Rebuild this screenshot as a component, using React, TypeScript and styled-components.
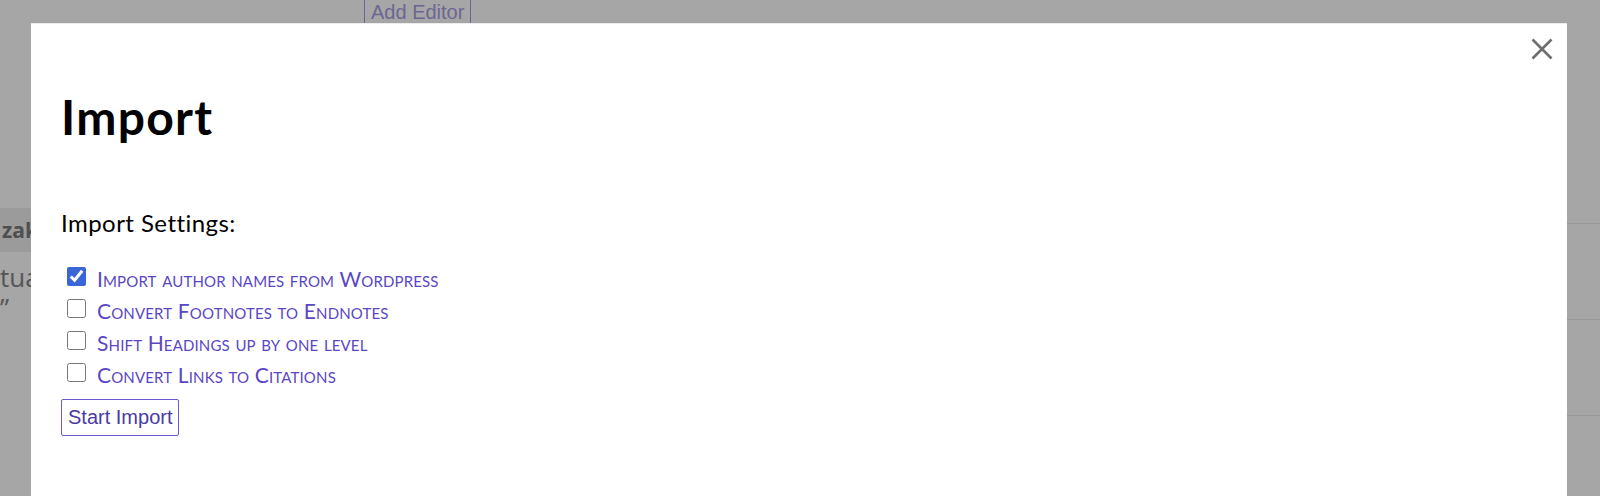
import React from "react";
import styled, { createGlobalStyle } from "styled-components";

const Global = createGlobalStyle`
  html, body {
    margin: 0;
    padding: 0;
    background: #ffffff;
    width: 1600px;
    height: 496px;
    overflow: hidden;
  }
  * { box-sizing: border-box; }
`;

/* ---------- underlying page ---------- */

const Page = styled.div`
  width: 1600px;
  height: 496px;
  overflow: hidden;
  font-family: "Open Sans", "Liberation Sans", sans-serif;
`;

const TopBar = styled.div`
  display: flex;
  align-items: flex-start;
  height: 40px;
  margin-top: -6px;
  padding-left: 364px;
`;

const GhostButton = styled.button`
  font-family: "Liberation Sans", Arial, sans-serif;
  font-size: 20px;
  line-height: 23px;
  padding: 6px 6px;
  background: #ffffff;
  border: 1px solid #a99ae6;
  border-radius: 2px;
  color: #a89de0;
`;

const Body = styled.div`
  display: flex;
`;

const Sidebar = styled.aside`
  width: 31px;
  flex: none;
  overflow: hidden;
  padding-top: 174px;
  display: flex;
  flex-direction: column;
`;

const SideBand = styled.div`
  height: 44px;
  background: #efefef;
  display: flex;
  align-items: center;
  padding-left: 2px;
  font-weight: 700;
  font-size: 21px;
  color: #7a7a7a;
  white-space: nowrap;
`;

const SideText = styled.p<{ $tight?: boolean }>`
  margin: ${(p) => (p.$tight ? "0" : "10px")} 0 0 0;
  font-size: 26px;
  line-height: 30px;
  color: #848484;
  white-space: nowrap;
`;

const Main = styled.main`
  flex: 1;
  padding-top: 94px;
`;

const TableRow = styled.div`
  height: 96px;
  border-bottom: 1px solid #e9e9e9;
`;

const Overlay = styled.div`
  position: fixed;
  inset: 0;
  background: rgba(0, 0, 0, 0.35);
`;

/* ---------- modal ---------- */

const Modal = styled.div`
  position: fixed;
  top: 23px;
  left: 31px;
  width: 1536px;
  bottom: -40px;
  background: #ffffff;
  border-top: 1px solid #ececec;
  padding: 64px 30px 0 30px;
`;

const CloseButton = styled.button`
  position: absolute;
  top: 13px;
  right: 13px;
  width: 24px;
  height: 24px;
  padding: 0;
  border: none;
  background: transparent;
  display: flex;
  align-items: center;
  justify-content: center;
`;

const Title = styled.h1`
  margin: 0;
  font-family: Lato, "Noto Sans", sans-serif;
  font-weight: 700;
  font-size: 48px;
  line-height: 57.6px;
  letter-spacing: 1.3px;
  color: #000000;
`;

const SectionTitle = styled.h2`
  margin: 63px 0 0 0;
  font-family: Lato, "Noto Sans", sans-serif;
  font-weight: 400;
  font-size: 24px;
  line-height: 28.8px;
  letter-spacing: 0.45px;
  color: #000000;
`;

const OptionList = styled.div`
  margin-top: 26px;
  display: flex;
  flex-direction: column;
`;

const OptionRow = styled.label`
  display: flex;
  align-items: center;
  height: 32px;
  font-family: Lato, "Noto Sans", sans-serif;
  font-size: 21px;
  line-height: 32px;
  font-variant: small-caps;
  letter-spacing: 0.15px;
  color: #5a47c4;
  cursor: pointer;
`;

const Check = styled.input`
  width: 19px;
  height: 19px;
  margin: 0 11px 5px 6px;
  accent-color: #3b66d8;
`;

const StartButton = styled.button`
  margin-top: 8px;
  align-self: flex-start;
  font-family: "Liberation Sans", Arial, sans-serif;
  font-size: 20px;
  line-height: 23px;
  padding: 6px 6px;
  background: #ffffff;
  border: 1px solid #6a5acd;
  border-radius: 2px;
  color: #4a3aa6;
  cursor: pointer;
`;

const ModalBody = styled.div`
  display: flex;
  flex-direction: column;
`;

const options = [
  { label: "Import author names from Wordpress", checked: true },
  { label: "Convert Footnotes to Endnotes", checked: false },
  { label: "Shift Headings up by one level", checked: false },
  { label: "Convert Links to Citations", checked: false },
];

export default function App() {
  return (
    <>
      <Global />
      <Page>
        <TopBar>
          <GhostButton>Add Editor</GhostButton>
        </TopBar>
        <Body>
          <Sidebar>
            <SideBand>zakarra</SideBand>
            <SideText>tuala</SideText>
            <SideText $tight>”</SideText>
          </Sidebar>
          <Main>
            <TableRow />
            <TableRow />
            <TableRow />
          </Main>
        </Body>
      </Page>
      <Overlay />
      <Modal role="dialog" aria-modal="true">
        <CloseButton aria-label="Close">
          <svg width="22" height="22" viewBox="0 0 22 22">
            <path d="M1.5 1.5 L20.5 20.5 M20.5 1.5 L1.5 20.5" stroke="#6e6e6e" strokeWidth="2.6" strokeLinecap="butt" fill="none" />
          </svg>
        </CloseButton>
        <ModalBody>
          <Title>Import</Title>
          <SectionTitle>Import Settings:</SectionTitle>
          <OptionList>
            {options.map((o) => (
              <OptionRow key={o.label}>
                <Check type="checkbox" defaultChecked={o.checked} />
                {o.label}
              </OptionRow>
            ))}
          </OptionList>
          <StartButton>Start Import</StartButton>
        </ModalBody>
      </Modal>
    </>
  );
}
